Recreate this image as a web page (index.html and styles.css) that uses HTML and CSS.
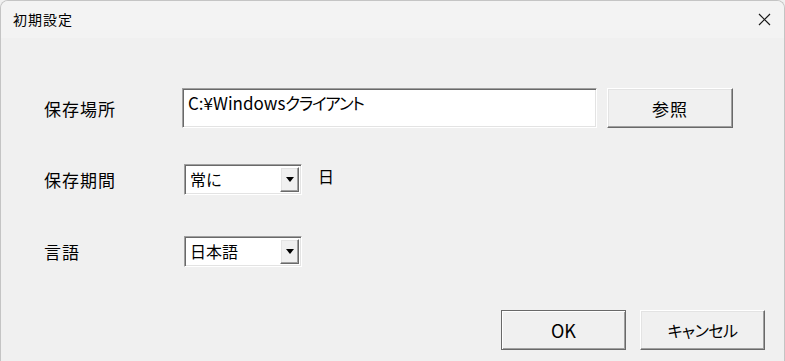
FILE: index.html
```html
<!DOCTYPE html>
<html lang="ja">
<head>
    <meta charset="UTF-8">
    <meta name="viewport" content="width=device-width, initial-scale=1.0">
    <title>初期設定</title>
    <link rel="stylesheet" href="styles.css">
</head>
<body>
    <div class="window">
        <div class="titlebar">
            <span class="title">初期設定</span>
            <span class="close">
                <svg width="13" height="13" viewBox="0 0 13 13">
                    <path d="M1 1 L12 12 M12 1 L1 12" stroke="#1a1a1a" stroke-width="1.2" fill="none"/>
                </svg>
            </span>
        </div>
        <div class="content">
            <div class="row row-path">
                <label class="label">保存場所</label>
                <div class="textbox sunken">C:¥Windows<span class="kana">クライアント</span></div>
                <button class="btn raised browse">参照</button>
            </div>
            <div class="row row-period">
                <label class="label">保存期間</label>
                <div class="combo sunken">
                    <span class="combo-text">常に</span>
                    <span class="combo-arrow raised"></span>
                </div>
                <span class="unit">日</span>
            </div>
            <div class="row row-lang">
                <label class="label">言語</label>
                <div class="combo sunken">
                    <span class="combo-text">日本語</span>
                    <span class="combo-arrow raised"></span>
                </div>
            </div>
            <div class="actions">
                <button class="btn raised default ok">OK</button>
                <button class="btn raised cancel">キャンセル</button>
            </div>
        </div>
    </div>
</body>
</html>
```

FILE: styles.css
```css
body {
    margin: 0;
    padding: 0;
    background: #f0f0f0;
    font-family: "Noto Sans CJK JP", "Noto Sans", sans-serif;
    color: #000;
}
.window {
    width: 785px;
    height: 361px;
    box-sizing: border-box;
    border: 1px solid #c4c4c4;
    border-bottom: none;
    border-radius: 8px 8px 0 0;
    overflow: hidden;
    background: #f0f0f0;
}
.titlebar {
    height: 37px;
    display: flex;
    align-items: center;
    justify-content: space-between;
    padding: 0 0 0 12px;
    background: #f3f3f3;
}
.title {
    font-size: 14px;
    letter-spacing: 1px;
    margin-top: -2px;
}
.close {
    width: 40px;
    display: flex;
    justify-content: center;
    margin-top: -1px;
}
.content {
    padding: 50px 0 0 43px;
}
.row {
    display: flex;
    align-items: center;
}
.label {
    width: 138px;
    font-size: 17px;
    letter-spacing: 1px;
}
.row-period {
    margin-top: 36px;
}
.row-lang {
    margin-top: 41px;
}
.sunken {
    border: 1px solid;
    border-color: #a0a0a0 #ffffff #ffffff #a0a0a0;
    box-shadow: inset 1px 1px #696969, inset -1px -1px #e3e3e3;
    background: #fff;
    box-sizing: border-box;
}
.raised {
    border: 1px solid;
    border-color: #ffffff #696969 #696969 #ffffff;
    box-shadow: inset -1px -1px #a0a0a0, inset 1px 1px #e3e3e3;
    background: #f0f0f0;
    box-sizing: border-box;
}
.textbox {
    width: 415px;
    height: 40px;
    padding: 1px 0 0 5px;
    font-size: 17px;
    line-height: 26px;
}
.kana {
    font-size: 16.5px;
    font-feature-settings: "palt";
    letter-spacing: -1.2px;
}
.btn {
    font-family: "Noto Sans CJK JP", "Noto Sans", sans-serif;
    font-size: 17px;
    color: #000;
    height: 40px;
    padding: 0;
}
.browse {
    width: 126px;
    margin-left: 10px;
    letter-spacing: 1px;
}
.combo {
    width: 118px;
    height: 31px;
    margin-left: 2px;
    display: flex;
    align-items: stretch;
    padding: 2px;
}
.combo-text {
    flex: 1;
    font-size: 16px;
    line-height: 25px;
    padding-left: 3px;
}
.combo-arrow {
    width: 19px;
    display: flex;
    align-items: center;
    justify-content: center;
}
.combo-arrow::after {
    content: "";
    border-left: 4.5px solid transparent;
    border-right: 4.5px solid transparent;
    border-top: 5px solid #000;
}
.unit {
    font-size: 16px;
    margin-left: 16px;
    margin-top: -8px;
}
.actions {
    display: flex;
    justify-content: flex-end;
    gap: 14px;
    margin-top: 43px;
    padding-right: 19px;
}
.actions .btn {
    width: 125px;
}
.ok {
    font-size: 18px;
}
.cancel {
    font-size: 16px;
    font-feature-settings: "palt";
    letter-spacing: -0.5px;
}
.default {
    border-color: #696969;
    box-shadow: inset 1px 1px #fff, inset -1px -1px #a0a0a0;
}
```
